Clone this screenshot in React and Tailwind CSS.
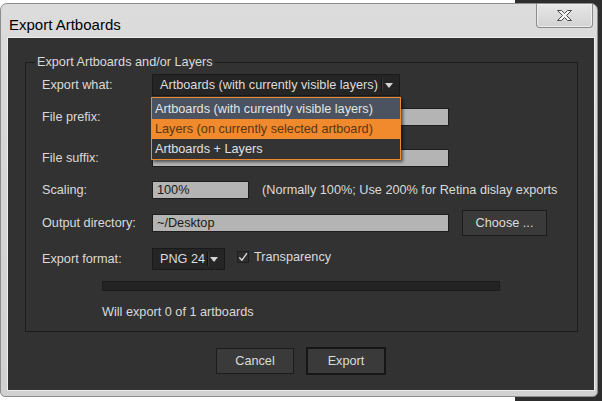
import React from "react";

function Arrow() {
  return (
    <svg width="8" height="5" viewBox="0 0 8 5" className="block">
      <polygon points="0,0 8,0 4,5" fill="#d4d4d4" />
    </svg>
  );
}

function Select({ w, text, sepLeft, children }) {
  return (
    <div
      className="relative h-[22px] bg-[#252525] border border-[#1a1a1a] flex items-center text-[#dcdcdc]"
      style={{ width: w }}
    >
      <span className="pl-[7px] whitespace-nowrap">{text}</span>
      <div className="absolute top-[3px] bottom-[3px] w-[2px] border-l border-[#141414] bg-[#3a3a3a]" style={{ left: sepLeft }} />
      <div className="absolute right-[6px] top-[8px]">
        <Arrow />
      </div>
      {children}
    </div>
  );
}

function Input({ w, value }) {
  return (
    <div
      className="h-[18px] bg-[#b4b4b4] border border-[#1e1e1e] flex items-center pl-[4px] text-[#1a1a1a] whitespace-nowrap"
      style={{ width: w }}
    >
      {value}
    </div>
  );
}

export default function App() {
  return (
    <div
      className="relative w-[602px] h-[401px] bg-white overflow-hidden text-[12.7px] leading-[14px]"
      style={{ fontFamily: '"Liberation Sans", Arial, sans-serif' }}
    >
      {/* window behind */}
      <div className="absolute left-[515px] top-0 right-0 bottom-0 bg-[#2d2d2d]" />
      {/* dialog window */}
      <div className="absolute left-0 top-[3px] w-[598px] h-[394px] rounded-t-[7px] rounded-b-[5px] border border-[#8c8c8c] bg-gradient-to-b from-[#dcdcdc] via-[#d4d4d4] to-[#d0d0d0] flex flex-col">
        {/* title bar */}
        <div className="h-[34px] flex items-start justify-between">
          <div className="mt-[12px] ml-[8px] text-[15px] leading-[18px] text-black">Export Artboards</div>
          <div className="mr-[4px] w-[57px] h-[24px] rounded-b-[4px] border border-t-0 border-[#8a8a8a] bg-gradient-to-b from-[#e6e6e6] to-[#d2d2d2] shadow-[inset_0_0_0_1px_#efefef] flex items-center justify-center">
            <svg width="17" height="13" viewBox="0 0 17 13">
              <polygon
                points="1.5,1.5 5.5,1.5 8.5,4.5 11.5,1.5 15.5,1.5 10.5,6.5 15.5,11.5 11.5,11.5 8.5,8.5 5.5,11.5 1.5,11.5 6.5,6.5"
                fill="#f6f6f6"
                stroke="#4a4a4a"
                strokeWidth="1"
                strokeLinejoin="round"
              />
            </svg>
          </div>
        </div>
        {/* client area */}
        <div className="flex-1 ml-[7px] mr-[3px] mb-[6px] bg-[#323232] shadow-[0_0_0_1px_#eeeeee] flex flex-col pt-[17px]">
          <fieldset className="ml-[17px] w-[553px] h-[277px] border border-[#1c1c1c] px-[9px] pt-[5px] text-[#dadada]">
            <legend className="px-[2px] leading-[14px] text-[#dadada]">Export Artboards and/or Layers</legend>
            <div className="pl-[7px] flex flex-col">
              {/* Export what */}
              <div className="h-[22px] flex items-center relative z-10">
                <div className="w-[110px]">Export what:</div>
                <Select w={248} text="Artboards (with currently visible layers)" sepLeft={228}>
                  <div className="absolute left-[-2px] top-[22px] w-[250px] border border-[#f0892b] bg-[#333333] shadow-[2px_2px_3px_rgba(0,0,0,0.55)] flex flex-col">
                    <div className="h-[21px] bg-[#4b5260] text-[#e4e4e4] flex items-center pl-[3px] whitespace-nowrap">
                      Artboards (with currently visible layers)
                    </div>
                    <div className="h-[20px] bg-[#f08a2c] text-[#5a3612] flex items-center pl-[3px] whitespace-nowrap">
                      Layers (on currently selected artboard)
                    </div>
                    <div className="h-[20px] text-[#e0e0e0] flex items-center pl-[3px] whitespace-nowrap">
                      Artboards + Layers
                    </div>
                  </div>
                </Select>
              </div>
              {/* File prefix */}
              <div className="mt-[12px] h-[18px] flex items-center">
                <div className="w-[110px]">File prefix:</div>
                <Input w={297} value="" />
              </div>
              {/* File suffix */}
              <div className="mt-[23px] h-[18px] flex items-center">
                <div className="w-[110px]">File suffix:</div>
                <Input w={297} value="" />
              </div>
              {/* Scaling */}
              <div className="mt-[14px] h-[18px] flex items-center">
                <div className="w-[110px]">Scaling:</div>
                <Input w={97} value="100%" />
                <div className="ml-[13px] whitespace-nowrap">(Normally 100%; Use 200% for Retina dislay exports</div>
              </div>
              {/* Output directory */}
              <div className="mt-[11px] h-[26px] flex items-center">
                <div className="w-[110px]">Output directory:</div>
                <Input w={297} value="~/Desktop" />
                <button className="ml-[13px] w-[85px] h-[26px] bg-[#3a3a3a] border border-[#1c1c1c] text-[#dcdcdc] flex items-center justify-center">
                  Choose ...
                </button>
              </div>
              {/* Export format */}
              <div className="mt-[12px] h-[22px] flex items-center">
                <div className="w-[110px]">Export format:</div>
                <Select w={73} text="PNG 24" sepLeft={54} />
                <div className="ml-[12px] mt-[-4px] w-[12px] h-[12px] border border-[#1e1e1e] bg-[#2e2e2e] flex items-center justify-center">
                  <svg width="11" height="11" viewBox="0 0 11 11" className="block">
                    <path d="M1.5 5.5 L4.3 8.5 L9.8 0.8" fill="none" stroke="#e2e2e2" strokeWidth="1.4" />
                  </svg>
                </div>
                <div className="ml-[5px] mt-[-4px]">Transparency</div>
              </div>
              {/* progress */}
              <div className="mt-[11px] ml-[60px] w-[398px] h-[10px] bg-[#232323] border border-[#1a1a1a]" />
              {/* status */}
              <div className="mt-[14px] ml-[60px] h-[14px]">Will export 0 of 1 artboards</div>
            </div>
          </fieldset>
          {/* buttons */}
          <div className="mt-[15px] flex items-center justify-center gap-[12px]">
            <button className="w-[78px] h-[26px] bg-[#3a3a3a] border border-[#1c1c1c] text-[#dcdcdc] flex items-center justify-center">
              Cancel
            </button>
            <button className="w-[80px] h-[28px] bg-[#3a3a3a] border-2 border-[#161616] text-[#dcdcdc] flex items-center justify-center">
              Export
            </button>
          </div>
        </div>
      </div>
    </div>
  );
}
